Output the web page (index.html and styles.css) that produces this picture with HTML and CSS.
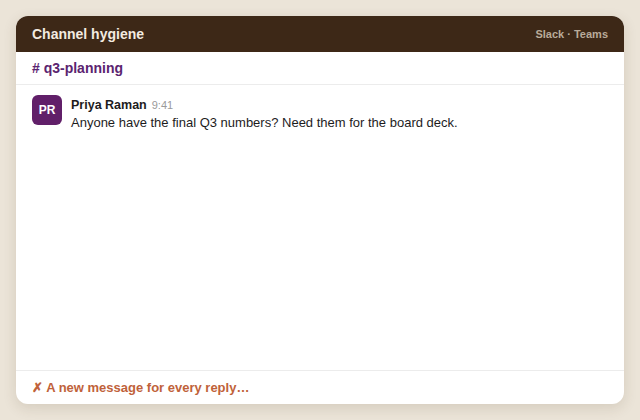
FILE: index.html
```html
<!DOCTYPE html>
<html lang="en">
<head>
  <meta charset="UTF-8" />
  <title>Channel hygiene</title>
  <link rel="stylesheet" href="styles.css">
</head>
<body>
  <div class="card">
    <div class="header">
      <span class="title">Channel hygiene</span>
      <span class="apps">Slack · Teams</span>
    </div>
    <div class="channel"># q3-planning</div>
    <div class="messages">
      <div class="msg">
        <div class="avatar">PR</div>
        <div class="body">
          <div class="meta"><span class="name">Priya Raman</span><span class="time">9:41</span></div>
          <div class="text">Anyone have the final Q3 numbers? Need them for the board deck.</div>
        </div>
      </div>
    </div>
    <div class="footer">✗ A new message for every reply…</div>
  </div>
</body>
</html>
```

FILE: styles.css
```css
html, body {
  height: 100%;
}
body {
  margin: 0;
  padding: 16px;
  box-sizing: border-box;
  background: #ebe4d8;
  font-family: 'Liberation Sans', Arial, sans-serif;
  color: #1d1c1d;
}
.card {
  height: 100%;
  background: #fff;
  border-radius: 12px;
  overflow: hidden;
  display: flex;
  flex-direction: column;
  box-shadow: 0 4px 14px rgba(80, 60, 30, 0.14);
}
.header {
  height: 36px;
  flex: none;
  background: #3d2817;
  display: flex;
  align-items: center;
  justify-content: space-between;
  padding: 0 16px;
}
.title {
  font-size: 14px;
  font-weight: bold;
  color: #f3ebe0;
}
.apps {
  font-size: 11px;
  font-weight: bold;
  color: #b9ab9a;
}
.channel {
  height: 32px;
  flex: none;
  display: flex;
  align-items: center;
  padding: 0 16px;
  border-bottom: 1px solid #ececec;
  font-size: 14px;
  font-weight: bold;
  color: #5b2470;
}
.messages {
  flex: 1;
  padding: 10px 16px;
}
.msg {
  display: flex;
  gap: 9px;
}
.avatar {
  width: 30px;
  height: 30px;
  flex: none;
  border-radius: 6px;
  background: #611f69;
  color: #fff;
  font-size: 12px;
  font-weight: bold;
  display: flex;
  align-items: center;
  justify-content: center;
}
.body {
  padding-top: 2px;
}
.meta {
  display: flex;
  align-items: baseline;
  gap: 5px;
  line-height: 16px;
}
.name {
  font-size: 12.5px;
  font-weight: bold;
}
.time {
  font-size: 11px;
  color: #9a9a9a;
}
.text {
  font-size: 13px;
  line-height: 18px;
  margin-top: 1px;
}
.footer {
  height: 33px;
  flex: none;
  border-top: 1px solid #ececec;
  display: flex;
  align-items: center;
  padding: 0 16px;
  font-size: 13px;
  font-weight: bold;
  color: #c0623a;
}
```
